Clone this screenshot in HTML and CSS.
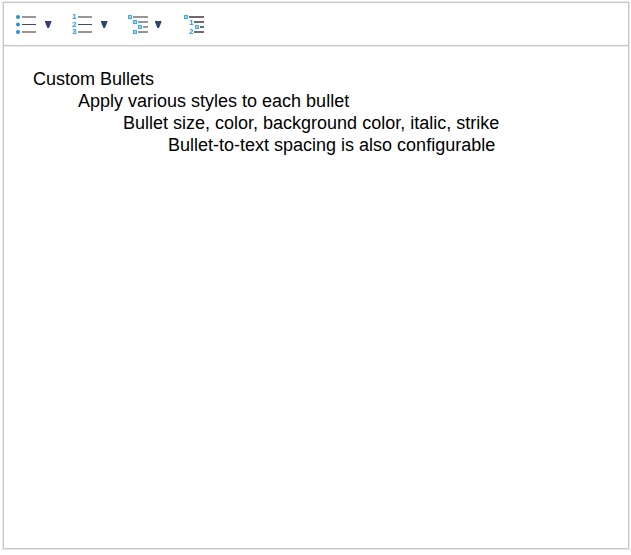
FILE: index.html
```
<!DOCTYPE html>
<html lang="en">
<head>
    <meta charset="UTF-8">
    <meta name="viewport" content="width=device-width, initial-scale=1.0">
    <title>Custom Bullets</title>
    <link rel="stylesheet" href="styles.css">
</head>
<body>

    <div class="editor">
        <div class="toolbar">
            <div class="tool">
                <button type="button" class="icon-btn" aria-label="Bulleted list">
                    <svg width="22" height="22" viewBox="0 0 22 22">
                        <g class="dots">
                            <circle cx="2" cy="4" r="2"/>
                            <circle cx="2" cy="11.5" r="2"/>
                            <circle cx="2" cy="19" r="2"/>
                        </g>
                        <path class="line-top" d="M6 4h14"/>
                        <path class="line-mid" d="M6 11.5h14"/>
                        <path class="line-low" d="M6 19h14"/>
                    </svg>
                </button>
                <button type="button" class="arrow-btn" aria-label="Bullet styles">
                    <svg width="7" height="7" viewBox="0 0 7 7"><path d="M0 0h6.4v1L4 7H2.4L0 1z"/></svg>
                </button>
            </div>
            <div class="tool">
                <button type="button" class="icon-btn" aria-label="Numbered list">
                    <svg width="22" height="22" viewBox="0 0 22 22">
                        <g class="digits">
                            <text x="0" y="6">1</text>
                            <text x="0" y="14">2</text>
                            <text x="0" y="21">3</text>
                        </g>
                        <path class="line-top" d="M6 4h14"/>
                        <path class="line-mid" d="M6 11.5h14"/>
                        <path class="line-low" d="M6 19h14"/>
                    </svg>
                </button>
                <button type="button" class="arrow-btn" aria-label="Number styles">
                    <svg width="7" height="7" viewBox="0 0 7 7"><path d="M0 0h6.4v1L4 7H2.4L0 1z"/></svg>
                </button>
            </div>
            <div class="tool">
                <button type="button" class="icon-btn" aria-label="Multilevel list">
                    <svg width="20" height="22" viewBox="0 0 20 22">
                        <g class="squares">
                            <rect x="0.5" y="2.5" width="3" height="3"/>
                            <rect x="5.5" y="7.5" width="3" height="3"/>
                            <rect x="10.5" y="12.5" width="3" height="3"/>
                            <rect x="5.5" y="17.5" width="3" height="3"/>
                        </g>
                        <path class="line-top" d="M5 4h15M10 9h10M15 14h5"/>
                        <path class="line-low" d="M10 19h10"/>
                    </svg>
                </button>
                <button type="button" class="arrow-btn" aria-label="Multilevel styles">
                    <svg width="7" height="7" viewBox="0 0 7 7"><path d="M0 0h6.4v1L4 7H2.4L0 1z"/></svg>
                </button>
            </div>
            <div class="tool">
                <button type="button" class="icon-btn" aria-label="Custom multilevel list">
                    <svg width="22" height="22" viewBox="-2 0 22 22">
                        <g class="squares">
                            <rect x="0.5" y="2.5" width="3" height="3"/>
                            <rect x="11.5" y="12.5" width="3" height="3"/>
                        </g>
                        <g class="digits">
                            <text x="5" y="12">1</text>
                            <text x="5" y="21">2</text>
                        </g>
                        <path class="line-dark" d="M5 4h15M10 9h10M16 14h4M10 19h10"/>
                    </svg>
                </button>
            </div>
        </div>

        <div class="content" contenteditable="true" spellcheck="false">
            <ul>
                <li>Custom Bullets
                    <ul>
                        <li>Apply various styles to each bullet
                            <ul>
                                <li>Bullet size, color, background color, italic, strike
                                    <ul>
                                        <li>Bullet-to-text spacing is also configurable</li>
                                    </ul>
                                </li>
                            </ul>
                        </li>
                    </ul>
                </li>
            </ul>
        </div>
    </div>

</body>
</html>
```

FILE: styles.css
```
* {
    box-sizing: border-box;
}
body {
    margin: 0;
    height: 100vh;
    padding: 2px 2px 6px 3px;
    background: #fff;
    font-family: Arial, "Liberation Sans", sans-serif;
    color: #000;
}
.editor {
    display: flex;
    flex-direction: column;
    height: 100%;
    border: 1px solid #c8c8c8;
    box-shadow: 0 0 0 1px #e9e9e9;
}
.toolbar {
    display: flex;
    align-items: center;
    gap: 20px;
    padding: 10px 12px;
    border-bottom: 1px solid #c8c8c8;
    box-shadow: 0 1px 0 #e9e9e9;
}
.tool {
    display: flex;
    align-items: center;
    gap: 7px;
}
button {
    display: flex;
    padding: 0;
    border: none;
    background: none;
    cursor: pointer;
}
.arrow-btn path {
    fill: #2f4270;
}
.dots {
    fill: #2693cd;
}
.squares {
    fill: #8fd6f7;
    stroke: #45abdf;
}
.digits {
    fill: #2b9bd3;
    font: bold 8px "Liberation Sans", sans-serif;
}
.line-top {
    stroke: #96969c;
    stroke-width: 2;
}
.line-mid {
    stroke: #414960;
    stroke-width: 1;
}
.line-low {
    stroke: #9a948a;
    stroke-width: 2;
}
.line-dark {
    stroke: #6c6a6b;
    stroke-width: 2;
}
.content {
    flex: 1;
    padding: 22px 29px;
    font-size: 18px;
    line-height: 22px;
    outline: none;
}
.content ul {
    list-style: none;
    margin: 0;
    padding: 0;
}
.content ul ul {
    padding-left: 45px;
}
```
